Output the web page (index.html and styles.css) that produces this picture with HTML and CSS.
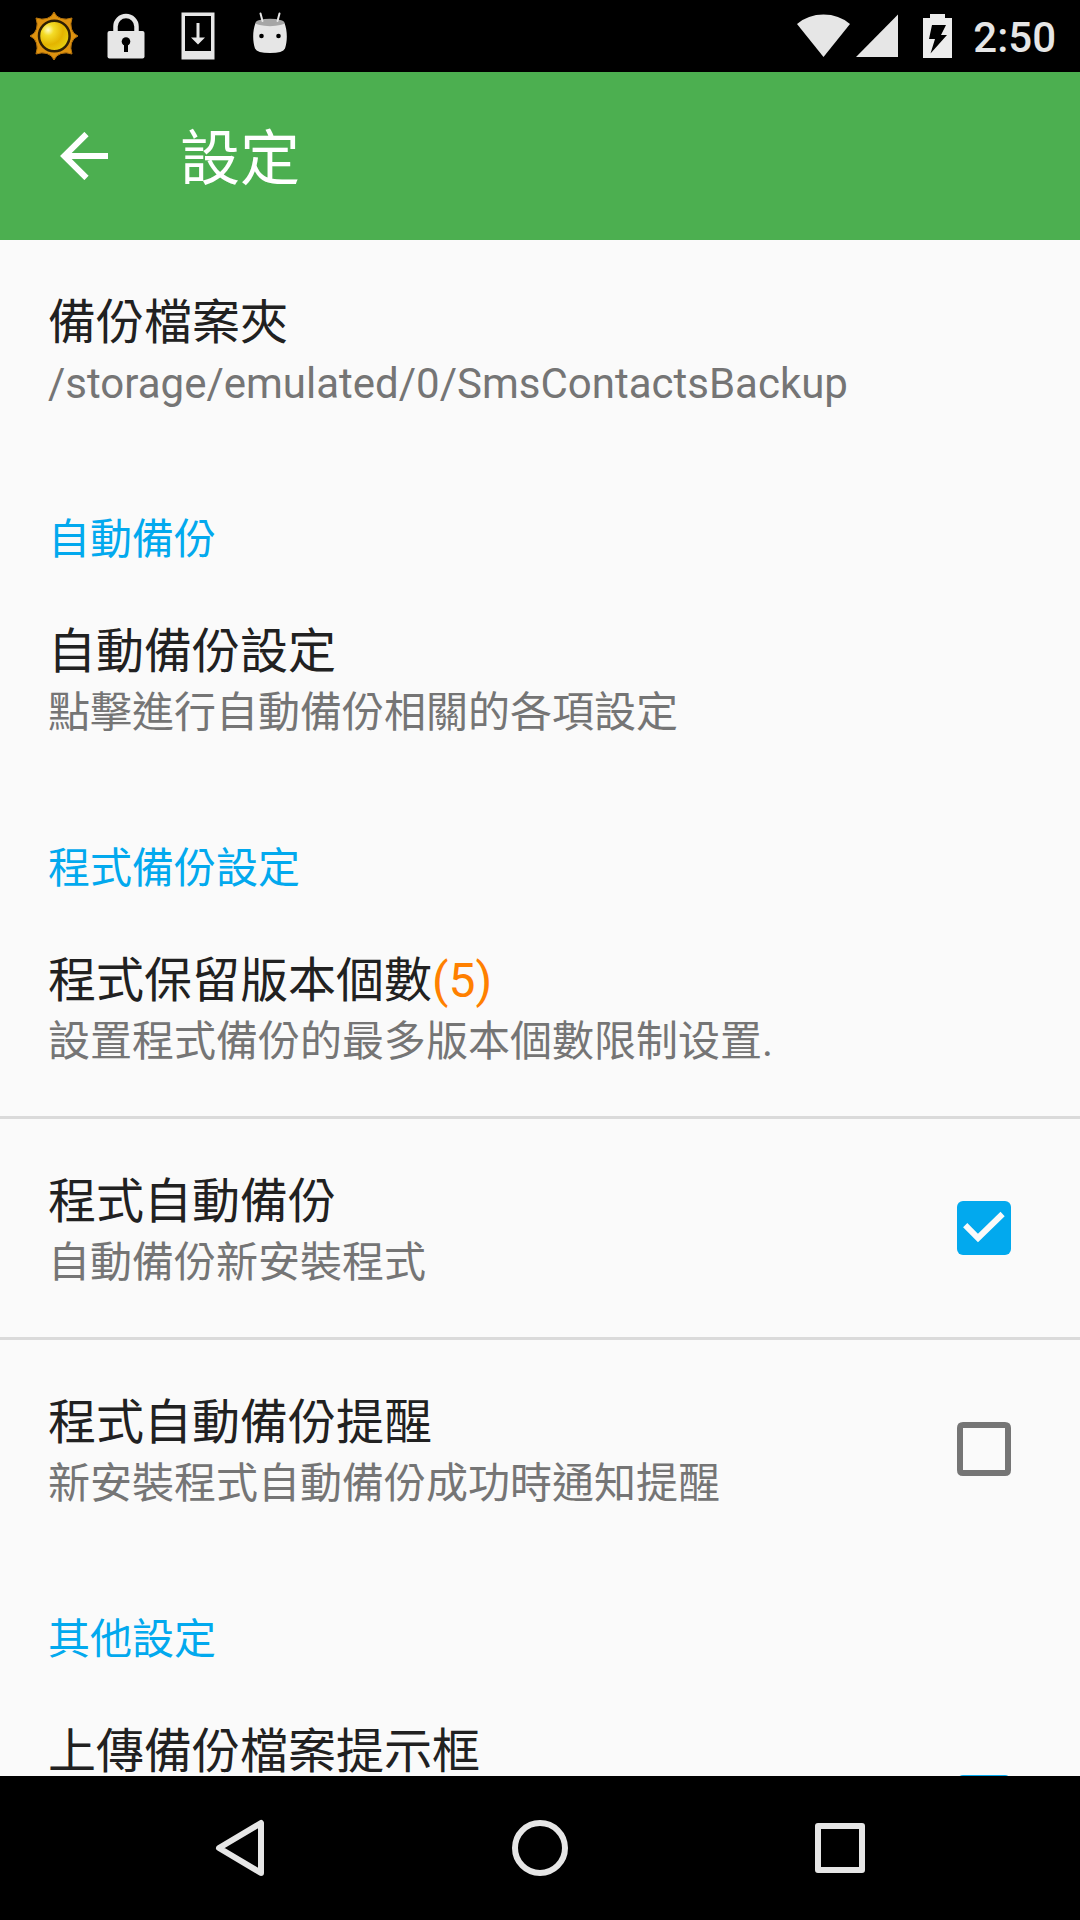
FILE: index.html
```html
<!DOCTYPE html>
<html lang="zh-Hant">
<head>
    <meta charset="UTF-8">
    <meta name="viewport" content="width=device-width, initial-scale=1.0">
    <title>設定</title>
    <link rel="stylesheet" href="styles.css">
</head>
<body>

    <header class="status-bar">
        <div class="status-icons">
            <svg width="72" height="72" viewBox="0 0 72 72">
                <defs>
                    <radialGradient id="sun" cx="0.3" cy="0.3" r="0.75">
                        <stop offset="0" stop-color="#fffcc0"/>
                        <stop offset="0.25" stop-color="#f4dc28"/>
                        <stop offset="0.65" stop-color="#e3b400"/>
                        <stop offset="1" stop-color="#e8d010"/>
                    </radialGradient>
                </defs>
                <path fill="#df930f" stroke="#b8740c" stroke-linejoin="round" d="M36 12Q38 17 43 18.500Q48 20 54 18Q52 24 53.500 29Q55 34 60 36Q55 38 53.500 43Q52 48 54 54Q48 52 43 53.500Q38 55 36 60Q34 55 29 53.500Q24 52 18 54Q20 48 18.500 43Q17 38 12 36Q17 34 18.500 29Q20 24 18 18Q24 20 29 18.500Q34 17 36 12z"/>
                <circle cx="36.300" cy="36" r="15.300" fill="url(#sun)" stroke="#2e1f04" stroke-width="2.500"/>
            </svg>
            <svg width="72" height="72" viewBox="0 0 72 72">
                <path fill="none" stroke="#e6e6e6" stroke-width="4.500" d="M25.500 33v-6.500a10.500 10.500 0 0 1 21 0V33"/>
                <rect x="17.500" y="31" width="37" height="27.500" rx="2" fill="#e6e6e6"/>
                <circle cx="36" cy="41.500" r="4.300"/>
                <path d="M34 43h4v9h-4z"/>
            </svg>
            <svg width="72" height="72" viewBox="0 0 72 72">
                <path fill="#e6e6e6" fill-rule="evenodd" d="M19.500 12.500h33v47h-33zM23 16v35h26V16z"/>
                <path fill="#e6e6e6" d="M34.500 23h3v14.500H43L36 44.500l-7-7h5.500z"/>
            </svg>
            <svg width="72" height="72" viewBox="0 0 72 72">
                <path fill="#e6e6e6" d="M21.500 23Q36 27 50.500 23C53.500 31 53.500 41 51 48.500Q49 53 36 53T21 48.500C18.500 41 18.500 31 21.500 23z"/>
                <ellipse cx="36" cy="22.500" rx="14.500" ry="3.700" fill="#a6a6a6"/>
                <path stroke="#e6e6e6" stroke-width="2" stroke-linecap="round" d="M28.500 21l-2-7.500M43.500 21l2-7.500"/>
                <circle cx="27.500" cy="36" r="2.300"/>
                <circle cx="44.500" cy="36" r="2.300"/>
            </svg>
        </div>
        <div class="system-icons">
            <svg width="54" height="44" viewBox="0 0 54 44"><path fill="#e6e6e6" d="M0 10Q11 .5 26.500 .5T53 10L26.500 43z"/></svg>
            <svg class="signal" width="42" height="44" viewBox="0 0 42 44"><path fill="#e6e6e6" d="M42 .5V43H0z"/></svg>
            <svg class="battery" width="29" height="44" viewBox="0 0 29 44">
                <path fill="#ececec" d="M7 0h15v4h7v40H0V4h7z"/>
                <path d="M9 11h14l-5 10h6L7.500 39.500 12 25H6z"/>
            </svg>
            <div class="clock">2:50</div>
        </div>
    </header>

    <div class="toolbar">
        <svg class="back" width="48" height="48" viewBox="0 0 48 48"><path d="M48 24H6M26.500 2L4.300 24l22.200 22"/></svg>
        <h1>設定</h1>
    </div>

    <main class="settings">
        <div class="item">
            <div class="title">備份檔案夾</div>
            <div class="summary">/storage/emulated/0/SmsContactsBackup</div>
        </div>
        <h2 class="category">自動備份</h2>
        <div class="item">
            <div class="title">自動備份設定</div>
            <div class="summary">點擊進行自動備份相關的各項設定</div>
        </div>
        <h2 class="category">程式備份設定</h2>
        <div class="item">
            <div class="title">程式保留版本個數<span class="count">(5)</span></div>
            <div class="summary">設置程式備份的最多版本個數限制设置.</div>
        </div>
        <div class="item check-item divided">
            <div>
                <div class="title">程式自動備份</div>
                <div class="summary">自動備份新安裝程式</div>
            </div>
            <svg class="checkbox" width="54" height="54" viewBox="0 0 54 54">
                <rect class="checkbox-fill" width="54" height="54" rx="6"/>
                <path class="checkbox-mark" d="M8.200 24.200l12.800 12.800L45.600 13"/>
            </svg>
        </div>
        <div class="item check-item divided">
            <div>
                <div class="title">程式自動備份提醒</div>
                <div class="summary">新安裝程式自動備份成功時通知提醒</div>
            </div>
            <svg class="checkbox" width="54" height="54" viewBox="0 0 54 54">
                <path fill="#757575" fill-rule="evenodd" d="M6 0h42q6 0 6 6v42q0 6-6 6H6q-6 0-6-6V6q0-6 6-6zM6 6v42h42V6z"/>
            </svg>
        </div>
        <h2 class="category">其他設定</h2>
        <div class="item check-item tall">
            <div>
                <div class="title">上傳備份檔案提示框</div>
            </div>
            <svg class="checkbox" width="54" height="54" viewBox="0 0 54 54">
                <rect class="checkbox-fill" width="54" height="54" rx="6"/>
                <path class="checkbox-mark" d="M8.200 24.200l12.800 12.800L45.600 13"/>
            </svg>
        </div>
    </main>

    <nav class="nav-bar">
        <svg width="60" height="60" viewBox="0 0 60 60"><path d="M51 5v50L9 30z"/></svg>
        <svg width="60" height="60" viewBox="0 0 60 60"><circle cx="30" cy="30" r="25"/></svg>
        <svg width="60" height="60" viewBox="0 0 60 60"><rect x="8" y="8" width="44" height="44"/></svg>
    </nav>

</body>
</html>
```

FILE: styles.css
```css
body {
    margin: 0;
    height: 1920px;
    display: flex;
    flex-direction: column;
    overflow: hidden;
    background-color: #fafafa;
    font-family: Roboto, "Noto Sans CJK TC", sans-serif;
}
h1, h2 {
    margin: 0;
    font-weight: 400;
}
svg {
    display: block;
    flex: none;
}
.status-bar {
    height: 72px;
    flex: none;
    display: flex;
    justify-content: space-between;
    align-items: center;
    box-sizing: border-box;
    padding: 0 24px 0 18px;
    background-color: #000;
}
.status-icons, .system-icons {
    display: flex;
    align-items: center;
}
.signal {
    margin-left: 5px;
}
.battery {
    margin-left: 25px;
}
.clock {
    margin-left: 21px;
    padding-top: 2px;
    color: #e6e6e6;
    font-size: 42px;
    font-weight: 500;
}
.toolbar {
    height: 168px;
    flex: none;
    display: flex;
    align-items: center;
    gap: 72px;
    padding-left: 60px;
    color: #fff;
    background-color: #4caf50;
}
.toolbar h1 {
    padding-bottom: 5px;
    font-size: 60px;
}
.back path {
    fill: none;
    stroke: #fff;
    stroke-width: 6;
}
.settings {
    flex: 1;
    min-height: 0;
    overflow: hidden;
}
.item {
    height: 218px;
    box-sizing: border-box;
    padding: 50px 48px 0;
}
.check-item {
    display: flex;
    justify-content: space-between;
    padding-right: 69px;
}
.divided {
    height: 221px;
    border-top: 3px solid #dadada;
}
.tall {
    height: 266px;
}
.title {
    height: 65px;
    line-height: 66px;
    font-size: 48px;
    color: #212121;
}
.count {
    color: #ff8000;
}
.summary {
    height: 57px;
    line-height: 57px;
    font-size: 42px;
    color: #757575;
}
.checkbox {
    margin-top: 32px;
}
.tall .checkbox {
    margin-top: 56px;
}
.checkbox-fill {
    fill: #02a9ee;
}
.checkbox-mark {
    fill: none;
    stroke: #fafafa;
    stroke-width: 6;
}
.category {
    height: 111px;
    box-sizing: border-box;
    padding: 51px 48px 0;
    line-height: 62px;
    font-size: 42px;
    color: #02a9ee;
}
.nav-bar {
    height: 144px;
    flex: none;
    display: flex;
    justify-content: center;
    align-items: center;
    gap: 240px;
    background-color: #000;
}
.nav-bar svg {
    fill: none;
    stroke: #e6e6e6;
    stroke-width: 6;
    stroke-linejoin: round;
}
```
